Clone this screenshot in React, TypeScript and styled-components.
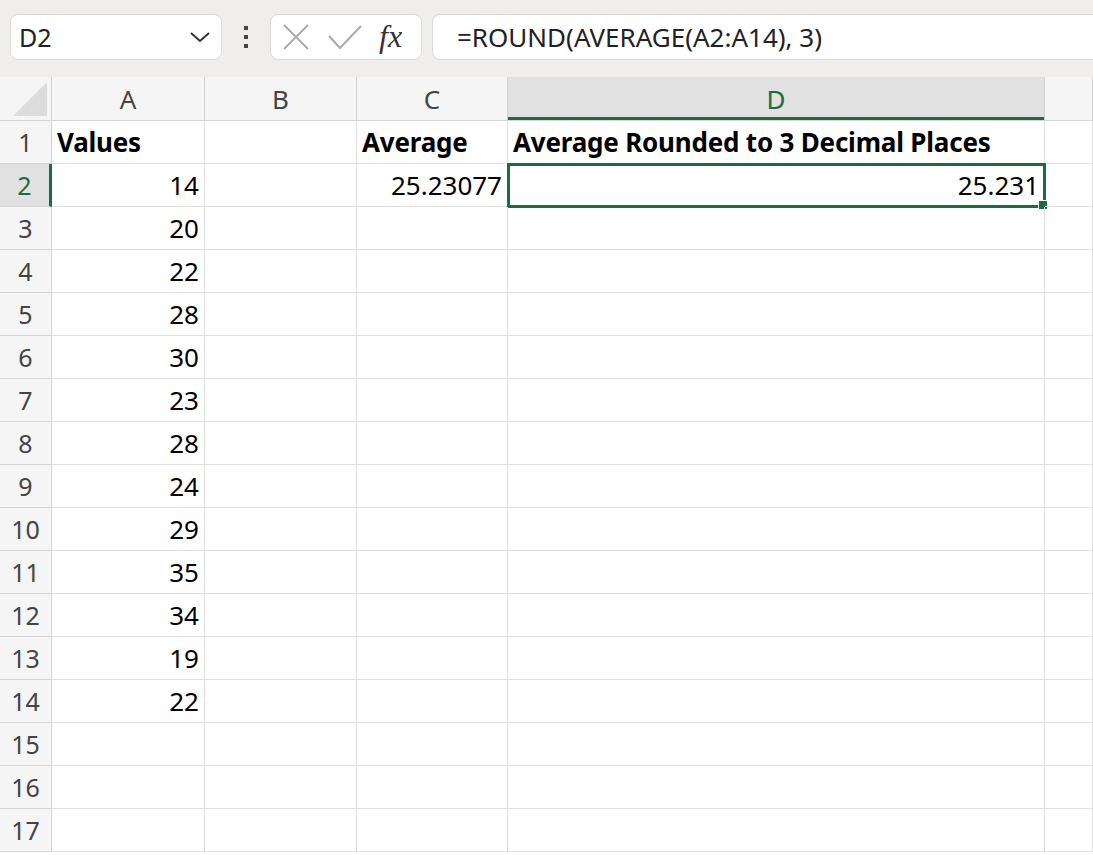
import React from 'react';
import styled, { createGlobalStyle } from 'styled-components';

const Global = createGlobalStyle`
  body { margin: 0; font-family: "Noto Sans", sans-serif; background: #fff; overflow: hidden; }
`;

const Toolbar = styled.div`
  height: 77px;
  background: #f0eeec;
  display: flex;
  align-items: center;
  padding: 0 0 4px 10px;
  box-sizing: border-box;
`;

const Box = styled.div<{ $w?: number }>`
  height: 46px;
  background: #fff;
  border: 1px solid #dcdad8;
  border-radius: 8px;
  display: flex;
  align-items: center;
  box-sizing: border-box;
  ${p => (p.$w ? `width: ${p.$w}px;` : 'flex: 1; border-right: none; border-radius: 8px 0 0 8px;')}
`;

const NameText = styled.span`
  flex: 1;
  padding-left: 8px;
  font-size: 25px;
  color: #222;
`;

const Formula = styled.span`
  padding-left: 24px;
  font-size: 26px;
  color: #222;
  white-space: nowrap;
`;

const Dots = styled.div`
  width: 48px;
  display: flex;
  flex-direction: column;
  align-items: center;
  gap: 5px;
  & span { width: 4px; height: 4px; background: #444; }
`;

const Fx = styled.span`
  font-family: "Liberation Serif", serif;
  font-style: italic;
  font-size: 32px;
  color: #333;
  margin-left: 16px;
`;

const Grid = styled.div`
  display: grid;
  grid-template-columns: 52px 153px 152px 151px 537px 1fr;
  grid-auto-rows: 43px;
  font-size: 26px;
`;

const HeadRow = styled.div`
  display: grid;
  grid-template-columns: 52px 153px 152px 151px 537px 1fr;
  height: 43px;
  background: #f5f5f5;
  border-bottom: 1px solid #d4d4d4;
`;

const ColHead = styled.div<{ $sel?: boolean }>`
  display: flex;
  align-items: center;
  justify-content: center;
  font-size: 26px;
  color: ${p => (p.$sel ? '#1e6b41' : '#444')};
  background: ${p => (p.$sel ? '#e1e1e1' : 'transparent')};
  border-right: 1px solid #d4d4d4;
  box-shadow: ${p => (p.$sel ? 'inset 0 -3px 0 #1e6b41' : 'none')};
`;

const Corner = styled.div`
  background: #f5f5f5;
  border-right: 1px solid #d4d4d4;
  position: relative;
  overflow: hidden;
  &::after {
    content: '';
    position: absolute;
    right: 4px;
    bottom: 4px;
    border-left: 34px solid transparent;
    border-bottom: 34px solid #dcdcdc;
  }
`;

const RowNum = styled.div<{ $sel?: boolean }>`
  background: ${p => (p.$sel ? '#e1e1e1' : '#f5f5f5')};
  color: ${p => (p.$sel ? '#1e6b41' : '#444')};
  border-right: ${p => (p.$sel ? '3px solid #1e6b41' : '1px solid #d4d4d4')};
  border-bottom: 1px solid #d4d4d4;
  display: flex;
  align-items: center;
  justify-content: center;
  font-size: 25px;
`;

const Cell = styled.div<{ $right?: boolean; $bold?: boolean; $sel?: boolean }>`
  border-right: 1px solid #e1e1e1;
  border-bottom: 1px solid #e1e1e1;
  display: flex;
  align-items: center;
  justify-content: ${p => (p.$right ? 'flex-end' : 'flex-start')};
  padding: 0 5px;
  font-weight: ${p => (p.$bold ? 700 : 400)};
  letter-spacing: ${p => (p.$bold ? '-0.2px' : '0')};
  color: #000;
  white-space: nowrap;
  position: relative;
  ${p => p.$sel && `
    outline: 3px solid #1e6b41;
    outline-offset: -2px;
    &::after { content: ''; position: absolute; right: -4px; bottom: -4px; width: 8px; height: 8px; background: #1e6b41; border: 1px solid #fff; }
  `}
`;

const values = [14, 20, 22, 28, 30, 23, 28, 24, 29, 35, 34, 19, 22];

export default function App() {
  const rows = [];
  for (let r = 1; r <= 17; r++) {
    let a: React.ReactNode = null;
    let c: React.ReactNode = null;
    let d: React.ReactNode = null;
    if (r === 1) {
      a = 'Values';
      c = 'Average';
      d = 'Average Rounded to 3 Decimal Places';
    } else if (r <= 14) a = values[r - 2];
    if (r === 2) {
      c = '25.23077';
      d = '25.231';
    }
    rows.push(
      <React.Fragment key={r}>
        <RowNum $sel={r === 2}>{r}</RowNum>
        <Cell $bold={r === 1} $right={r > 1}>{a}</Cell>
        <Cell />
        <Cell $bold={r === 1} $right={r > 1}>{c}</Cell>
        <Cell $bold={r === 1} $right={r > 1} $sel={r === 2}>{d}</Cell>
        <Cell />
      </React.Fragment>
    );
  }
  return (
    <>
      <Global />
      <Toolbar>
        <Box $w={212}>
          <NameText>D2</NameText>
          <svg width="22" height="14" viewBox="0 0 22 14" style={{ marginRight: 10 }}>
            <path d="M2 3l9 8 9-8" fill="none" stroke="#333" strokeWidth="2" />
          </svg>
        </Box>
        <Dots><span /><span /><span /></Dots>
        <Box $w={152}>
          <svg width="26" height="26" viewBox="0 0 26 26" style={{ marginLeft: 12 }}>
            <path d="M1 1l24 24M25 1L1 25" stroke="#aaa" strokeWidth="2" />
          </svg>
          <svg width="36" height="28" viewBox="0 0 36 28" style={{ marginLeft: 18 }}>
            <path d="M2 13l11 12L34 3" fill="none" stroke="#aaa" strokeWidth="2" />
          </svg>
          <Fx>fx</Fx>
        </Box>
        <div style={{ width: 10 }} />
        <Box>
          <Formula>=ROUND(AVERAGE(A2:A14), 3)</Formula>
        </Box>
      </Toolbar>
      <HeadRow>
        <Corner />
        <ColHead>A</ColHead>
        <ColHead>B</ColHead>
        <ColHead>C</ColHead>
        <ColHead $sel>D</ColHead>
        <ColHead />
      </HeadRow>
      <Grid>{rows}</Grid>
    </>
  );
}
